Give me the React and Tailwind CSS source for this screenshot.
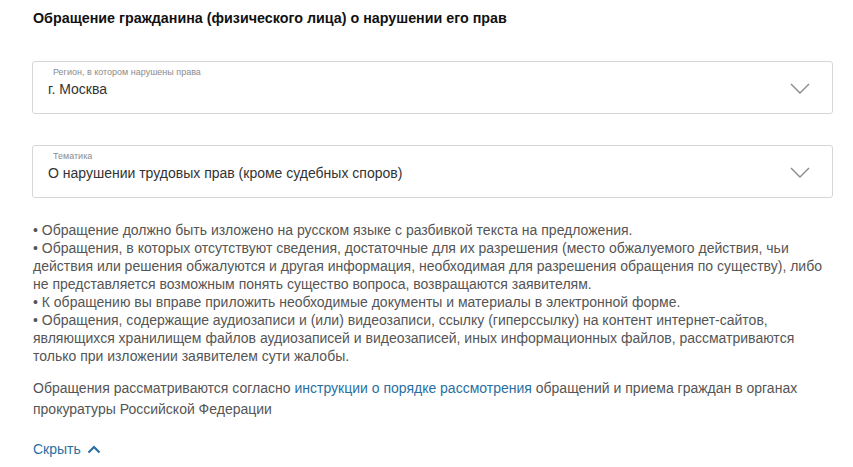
import React from "react";

function SelectBox({ label, value }) {
  return (
    <div className="relative h-[53px] rounded-[3px] border border-[#d6d6d6] bg-white">
      <div className="pl-[20px] pt-[5px] text-[9px] leading-[10px] text-[#8c8c8c]">{label}</div>
      <div className="pl-[15px] pt-[4px] text-[14px] leading-[16px] text-[#333]">{value}</div>
      <svg
        className="absolute right-[22px] top-[21px]"
        width="20"
        height="11"
        viewBox="0 0 20 11"
        fill="none"
      >
        <path d="M1 1l9 9 9-9" stroke="#8a8a8a" strokeWidth="1.4" />
      </svg>
    </div>
  );
}

export default function App() {
  return (
    <div
      className="w-[853px] h-[467px] bg-white px-[32px] pt-[10px]"
      style={{ fontFamily: '"Liberation Sans", Arial, sans-serif' }}
    >
      <h1 className="pl-[1px] text-[14.3px] leading-[17px] font-bold text-[#111]">
        Обращение гражданина (физического лица) о нарушении его прав
      </h1>

      <div className="mt-[34px] w-[801px] flex flex-col gap-[31px]">
        <SelectBox label="Регион, в котором нарушены права" value="г. Москва" />
        <SelectBox label="Тематика" value="О нарушении трудовых прав (кроме судебных споров)" />
      </div>

      <div className="mt-[23px] pl-[1px] w-[810px] text-[14px] leading-[18px] text-[#555] whitespace-nowrap">
        <p>• Обращение должно быть изложено на русском языке с разбивкой текста на предложения.</p>
        <p>
          • Обращения, в которых отсутствуют сведения, достаточные для их разрешения (место обжалуемого действия, чьи
          <br />
          действия или решения обжалуются и другая информация, необходимая для разрешения обращения по существу), либо
          <br />
          не представляется возможным понять существо вопроса, возвращаются заявителям.
        </p>
        <p>• К обращению вы вправе приложить необходимые документы и материалы в электронной форме.</p>
        <p>
          • Обращения, содержащие аудиозаписи и (или) видеозаписи, ссылку (гиперссылку) на контент интернет-сайтов,
          <br />
          являющихся хранилищем файлов аудиозаписей и видеозаписей, иных информационных файлов, рассматриваются
          <br />
          только при изложении заявителем сути жалобы.
        </p>
      </div>

      <p className="mt-[13px] pl-[1px] w-[810px] text-[14px] leading-[21px] text-[#555] whitespace-nowrap">
        Обращения рассматриваются согласно{" "}
        <a href="#" className="text-[#2a6fa3]">
          инструкции о порядке рассмотрения
        </a>{" "}
        обращений и приема граждан в органах
        <br />
        прокуратуры Российской Федерации
      </p>

      <button className="mt-[21px] pl-[1px] flex items-center gap-[6px] text-[14px] leading-[16px] text-[#2a6fa3]">
        Скрыть
        <svg width="14" height="9" viewBox="0 0 14 9" fill="none">
          <path d="M1.5 7.5L7 2l5.5 5.5" stroke="#2a6fa3" strokeWidth="2.2" />
        </svg>
      </button>
    </div>
  );
}
